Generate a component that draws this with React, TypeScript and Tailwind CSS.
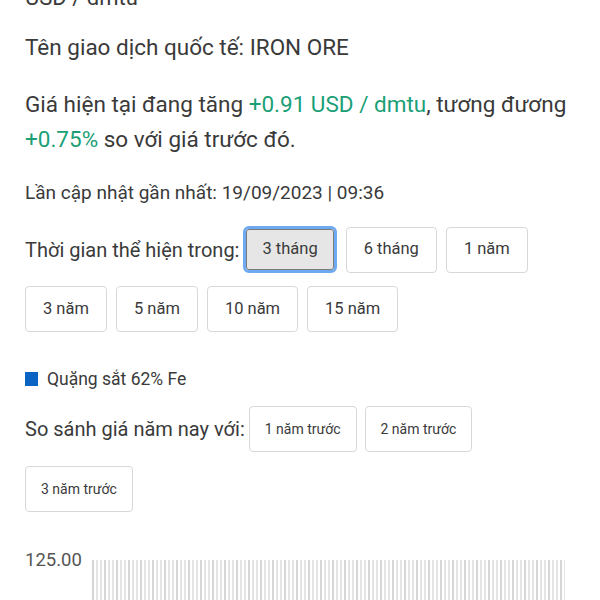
import React from 'react';

const green = 'text-[#1b9f77]';

const Btn = ({ label, small }: { label: string; small?: boolean }) => (
  <button
    className={`h-[46px] rounded-[4px] border-[1.5px] border-[#d8d8d8] bg-white text-[#3a3a3a] ${
      small ? 'px-[15px] text-[14px]' : 'px-[17px] text-[16.5px]'
    }`}
  >
    {label}
  </button>
);

const Stripes = () => {
  const xs: number[] = [];
  for (let x = 0; x < 473; x += 4) xs.push(x);
  return (
    <svg width="473" height="42" className="block">
      {xs.map((x, i) => (
        <rect
          key={x}
          x={x}
          y={0}
          width={2}
          height={42}
          fill={i % 3 === 0 ? '#d6d6d6' : '#e4e4e4'}
        />
      ))}
    </svg>
  );
};

export default function App() {
  return (
    <div className="h-[600px] w-[600px] overflow-hidden bg-white font-['Roboto','Noto_Sans',sans-serif] text-[#3a3a3a]">
      <div className="px-[25px]">
        <p className="-mt-[17px] text-[22px] leading-[30px]">USD / dmtu</p>

        <p className="mt-[19px] text-[22.5px] leading-[30px]">
          Tên giao dịch quốc tế: IRON ORE
        </p>

        <p className="mt-[25px] text-[22.5px] leading-[35px]">
          Giá hiện tại đang tăng <span className={green}>+0.91 USD / dmtu</span>
          , tương đương <span className={green}>+0.75%</span> so với giá trước
          đó.
        </p>

        <p className="mt-[24px] text-[19px] leading-[24px]">
          Lần cập nhật gần nhất: 19/09/2023 | 09:36
        </p>

        {/* khoảng thời gian */}
        <div className="mt-[21px] flex flex-wrap items-center gap-x-[9px] gap-y-[13px]">
          <span className="-mr-[5px] text-[20px]">Thời gian thể hiện trong:</span>
          <div className="rounded-[6px] border-[3px] border-[#6eaaf2]">
            <button className="h-[41px] rounded-[3px] border-[1.5px] border-[#7a7a7a] bg-[#e6e6e6] px-[15px] text-[16.5px] text-[#3a3a3a]">
              3 tháng
            </button>
          </div>
          <Btn label="6 tháng" />
          <Btn label="1 năm" />
          <Btn label="3 năm" />
          <Btn label="5 năm" />
          <Btn label="10 năm" />
          <Btn label="15 năm" />
        </div>

        {/* legend */}
        <div className="mt-[35px] flex items-center gap-[9px] text-[17.5px] leading-[24px]">
          <span className="h-[14px] w-[13px] bg-[#0b63c4]" />
          <span>Quặng sắt 62% Fe</span>
        </div>

        <div className="mt-[15px] flex flex-wrap items-center gap-x-[8px] gap-y-[14px]">
          <span className="-mr-[4px] text-[20px]">So sánh giá năm nay với:</span>
          <Btn label="1 năm trước" small />
          <Btn label="2 năm trước" small />
          <Btn label="3 năm trước" small />
        </div>

        {/* chart */}
        <div className="mt-[48px] flex items-start gap-[10px]">
          <span className="-mt-[11px] text-[18.5px] leading-[22px] text-[#555]">125.00</span>
          <Stripes />
        </div>
      </div>
    </div>
  );
}
